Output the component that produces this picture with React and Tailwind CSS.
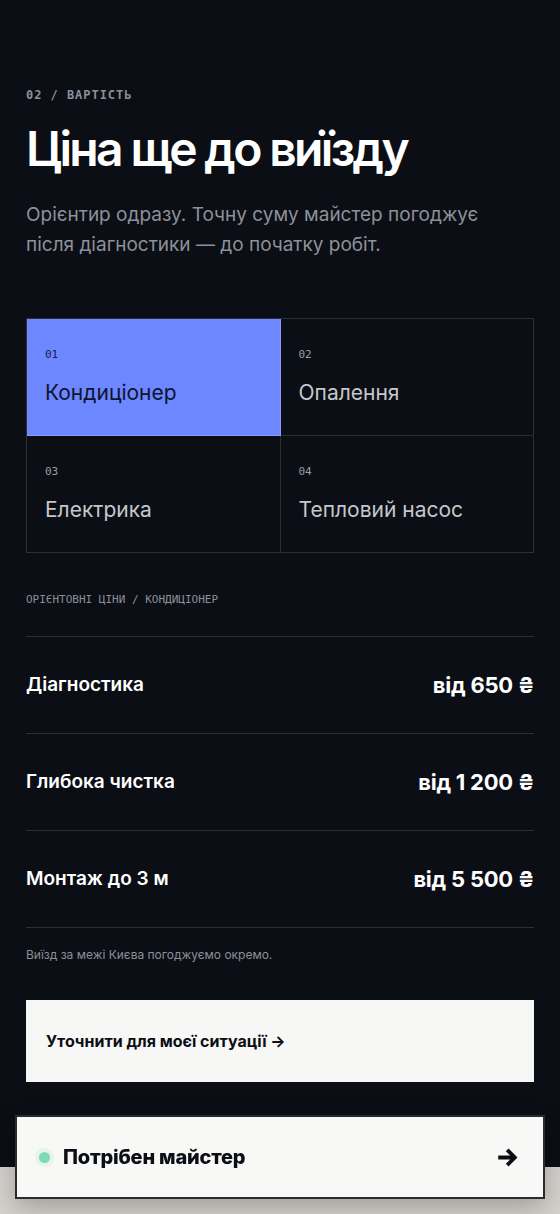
import React, { useState } from 'react';

const categories = [
  { num: '01', name: 'Кондиціонер' },
  { num: '02', name: 'Опалення' },
  { num: '03', name: 'Електрика' },
  { num: '04', name: 'Тепловий насос' },
];

const prices = [
  { label: 'Діагностика', value: 'від 650 ₴' },
  { label: 'Глибока чистка', value: 'від 1 200 ₴' },
  { label: 'Монтаж до 3 м', value: 'від 5 500 ₴' },
];

const sans = { fontFamily: 'Inter, "Noto Sans", sans-serif' };

const App = () => {
  const [active, setActive] = useState(0);

  return (
    <div className="min-h-[1214px] bg-[#d3d2cd]" style={sans}>
      <section className="bg-[#0b0e15] px-[26px] pt-[87px] pb-[85px]">
        {/* Section label */}
        <p className="font-['DejaVu_Sans_Mono',monospace] text-[12px] font-bold leading-4 tracking-[0.08em] text-[#8b8f98]">
          02 / ВАРТІСТЬ
        </p>

        <h2 className="mt-[18px] text-[48px] font-semibold leading-[56px] tracking-[-0.055em] text-white">
          Ціна ще до виїзду
        </h2>

        <p className="mt-[23px] max-w-[475px] text-[19px] leading-[30px] text-[#8d919a]">
          Орієнтир одразу. Точну суму майстер погоджує після діагностики — до початку робіт.
        </p>

        {/* Category grid */}
        <div className="mt-[58px] grid grid-cols-2 border-t border-l border-[#2b2e35]">
          {categories.map((c, i) => (
            <button
              key={c.num}
              onClick={() => setActive(i)}
              className={
                i === active
                  ? 'h-[117px] border-r border-b border-[#8c9bff] bg-[#6c87ff] px-[18px] text-left'
                  : 'h-[117px] border-r border-b border-[#2b2e35] px-[18px] text-left'
              }
            >
              <div
                className={
                  i === active
                    ? "font-['DejaVu_Sans_Mono',monospace] text-[11px] leading-4 text-[#1a2040]"
                    : "font-['DejaVu_Sans_Mono',monospace] text-[11px] leading-4 text-[#9a9ea6]"
                }
              >
                {c.num}
              </div>
              <div
                className={
                  i === active
                    ? 'mt-[16px] text-[21px] leading-7 text-[#0f1430]'
                    : 'mt-[16px] text-[21px] leading-7 text-[#c5c7cc]'
                }
              >
                {c.name}
              </div>
            </button>
          ))}
        </div>

        <p className="mt-[39px] font-['DejaVu_Sans_Mono',monospace] text-[11px] uppercase leading-4 text-[#8b8f98]">
          Орієнтовні ціни / {categories[active].name}
        </p>

        {/* Price list */}
        <div className="mt-[28px] border-t border-[#2b2e35]">
          {prices.map((p) => (
            <div
              key={p.label}
              className="flex h-[97px] items-center justify-between border-b border-[#2b2e35]"
            >
              <span className="text-[19px] font-semibold text-white">{p.label}</span>
              <span className="text-[22px] font-bold tracking-[-0.01em] text-white">{p.value}</span>
            </div>
          ))}
        </div>

        <p className="mt-[19px] text-[12px] leading-4 text-[#8b8f98]">
          Виїзд за межі Києва погоджуємо окремо.
        </p>

        <button className="mt-[37px] flex h-[82px] w-full items-center bg-[#f7f7f5] px-[20px] text-[16px] font-bold text-[#0b0e15]">
          Уточнити для моєї ситуації →
        </button>
      </section>

      {/* Sticky call to action */}
      <div className="fixed right-[15px] bottom-[15px] left-[15px] flex h-[84px] items-center justify-between border-2 border-[#2a2b2e] bg-[#f8f8f6] pr-[24px] pl-[22px] shadow-[0_8px_24px_rgba(0,0,0,0.25)]">
        <div className="flex items-center gap-[13px]">
          <span className="h-[11px] w-[11px] rounded-full bg-[#7ddbb9] ring-4 ring-[#7ddbb9]/15"></span>
          <span className="text-[20px] font-extrabold tracking-[-0.01em] text-[#0b0e15]">Потрібен майстер</span>
        </div>
        <svg width="21" height="21" viewBox="0 0 20 20" fill="none">
          <path d="M2 10h13M10 4l6 6-6 6" stroke="#0b0e15" strokeWidth="3.6" strokeLinecap="square" />
        </svg>
      </div>
    </div>
  );
};

export default App;
